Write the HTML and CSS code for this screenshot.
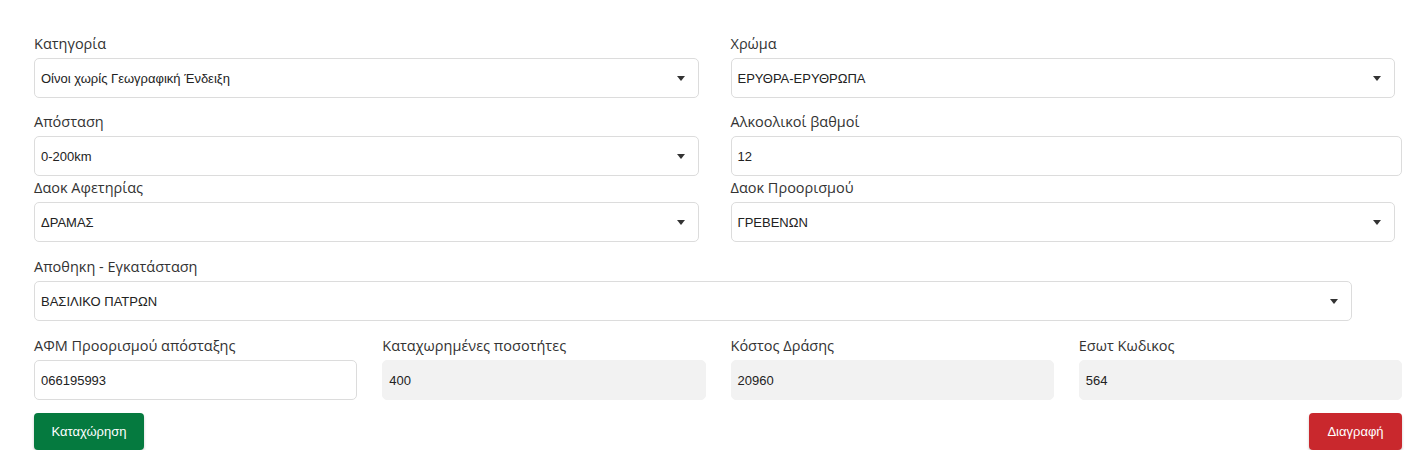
FILE: index.html
```html
<!DOCTYPE html>
<html lang="el">
<head>
<meta charset="utf-8">
<title>Form</title>
<link rel="stylesheet" href="styles.css">
</head>
<body>
<div class="page">
  <div class="row two r1">
    <div class="group">
      <div class="label">Κατηγορία</div>
      <div class="field select w99">Οίνοι χωρίς Γεωγραφική Ένδειξη<span class="arrow"></span></div>
    </div>
    <div class="group">
      <div class="label">Χρώμα</div>
      <div class="field select w99">ΕΡΥΘΡΑ-ΕΡΥΘΡΩΠΑ<span class="arrow"></span></div>
    </div>
  </div>
  <div class="row two r2">
    <div class="group">
      <div class="label">Απόσταση</div>
      <div class="field select w99">0-200km<span class="arrow"></span></div>
    </div>
    <div class="group">
      <div class="label">Αλκοολικοί βαθμοί</div>
      <div class="field">12</div>
    </div>
  </div>
  <div class="row two r3">
    <div class="group">
      <div class="label">Δαοκ Αφετηρίας</div>
      <div class="field select w99">ΔΡΑΜΑΣ<span class="arrow"></span></div>
    </div>
    <div class="group">
      <div class="label">Δαοκ Προορισμού</div>
      <div class="field select w99">ΓΡΕΒΕΝΩΝ<span class="arrow"></span></div>
    </div>
  </div>
  <div class="row one r4">
    <div class="group">
      <div class="label">Αποθηκη - Εγκατάσταση</div>
      <div class="field select wide">ΒΑΣΙΛΙΚΟ ΠΑΤΡΩΝ<span class="arrow"></span></div>
    </div>
  </div>
  <div class="row four r5">
    <div class="group">
      <div class="label">ΑΦΜ Προορισμού απόσταξης</div>
      <div class="field">066195993</div>
    </div>
    <div class="group">
      <div class="label">Καταχωρημένες ποσοτήτες</div>
      <div class="field disabled">400</div>
    </div>
    <div class="group">
      <div class="label">Κόστος Δράσης</div>
      <div class="field disabled">20960</div>
    </div>
    <div class="group">
      <div class="label">Εσωτ Κωδικος</div>
      <div class="field disabled">564</div>
    </div>
  </div>
  <div class="actions">
    <button class="btn btn-save">Καταχώρηση</button>
    <button class="btn btn-delete">Διαγραφή</button>
  </div>
</div>
</body>
</html>
```

FILE: styles.css
```css
html, body {
  margin: 0;
  padding: 0;
  background: #ffffff;
}

.page {
  padding: 34px 19px 0 34px;
}

.row {
  display: grid;
  column-gap: 25px;
}

.two { grid-template-columns: 1fr 1fr; }
.one { grid-template-columns: 1fr; }
.four { grid-template-columns: repeat(4, 1fr); }

.r1 { margin-bottom: 14px; }
.r2 { margin-bottom: 2px; }
.r3 { margin-bottom: 15px; }
.r4 { margin-bottom: 15px; }
.r5 { margin-bottom: 13px; }

.label {
  font-family: "Open Sans", "Liberation Sans", sans-serif;
  font-size: 14.5px;
  line-height: 20px;
  color: #333333;
  margin-bottom: 4px;
}

.field {
  box-sizing: border-box;
  height: 40px;
  border: 1px solid #dcdcdc;
  border-radius: 5px;
  background: #ffffff;
  padding: 0 30px 0 6px;
  display: flex;
  align-items: center;
  font-family: "Liberation Sans", Arial, sans-serif;
  font-size: 13px;
  color: #222222;
  position: relative;
}

.w99 { width: 99%; }
.wide { width: calc(100% - 50px); }

.disabled {
  background: #f2f2f2;
  border-color: #f2f2f2;
}

.arrow {
  position: absolute;
  right: 13px;
  top: 50%;
  margin-top: -2px;
  width: 0;
  height: 0;
  border-style: solid;
  border-width: 5px 4px 0 4px;
  border-color: #333333 transparent transparent transparent;
}

.actions {
  display: flex;
  justify-content: space-between;
}

.btn {
  height: 37px;
  border: none;
  border-radius: 4px;
  color: #ffffff;
  font-family: "Liberation Sans", Arial, sans-serif;
  font-size: 13px;
  padding: 0 17px;
  box-shadow: 0 2px 3px rgba(0, 0, 0, 0.2);
}

.btn-save {
  background: #057a3f;
  width: 110px;
}

.btn-delete {
  background: #c9282d;
  width: 93px;
}
```
